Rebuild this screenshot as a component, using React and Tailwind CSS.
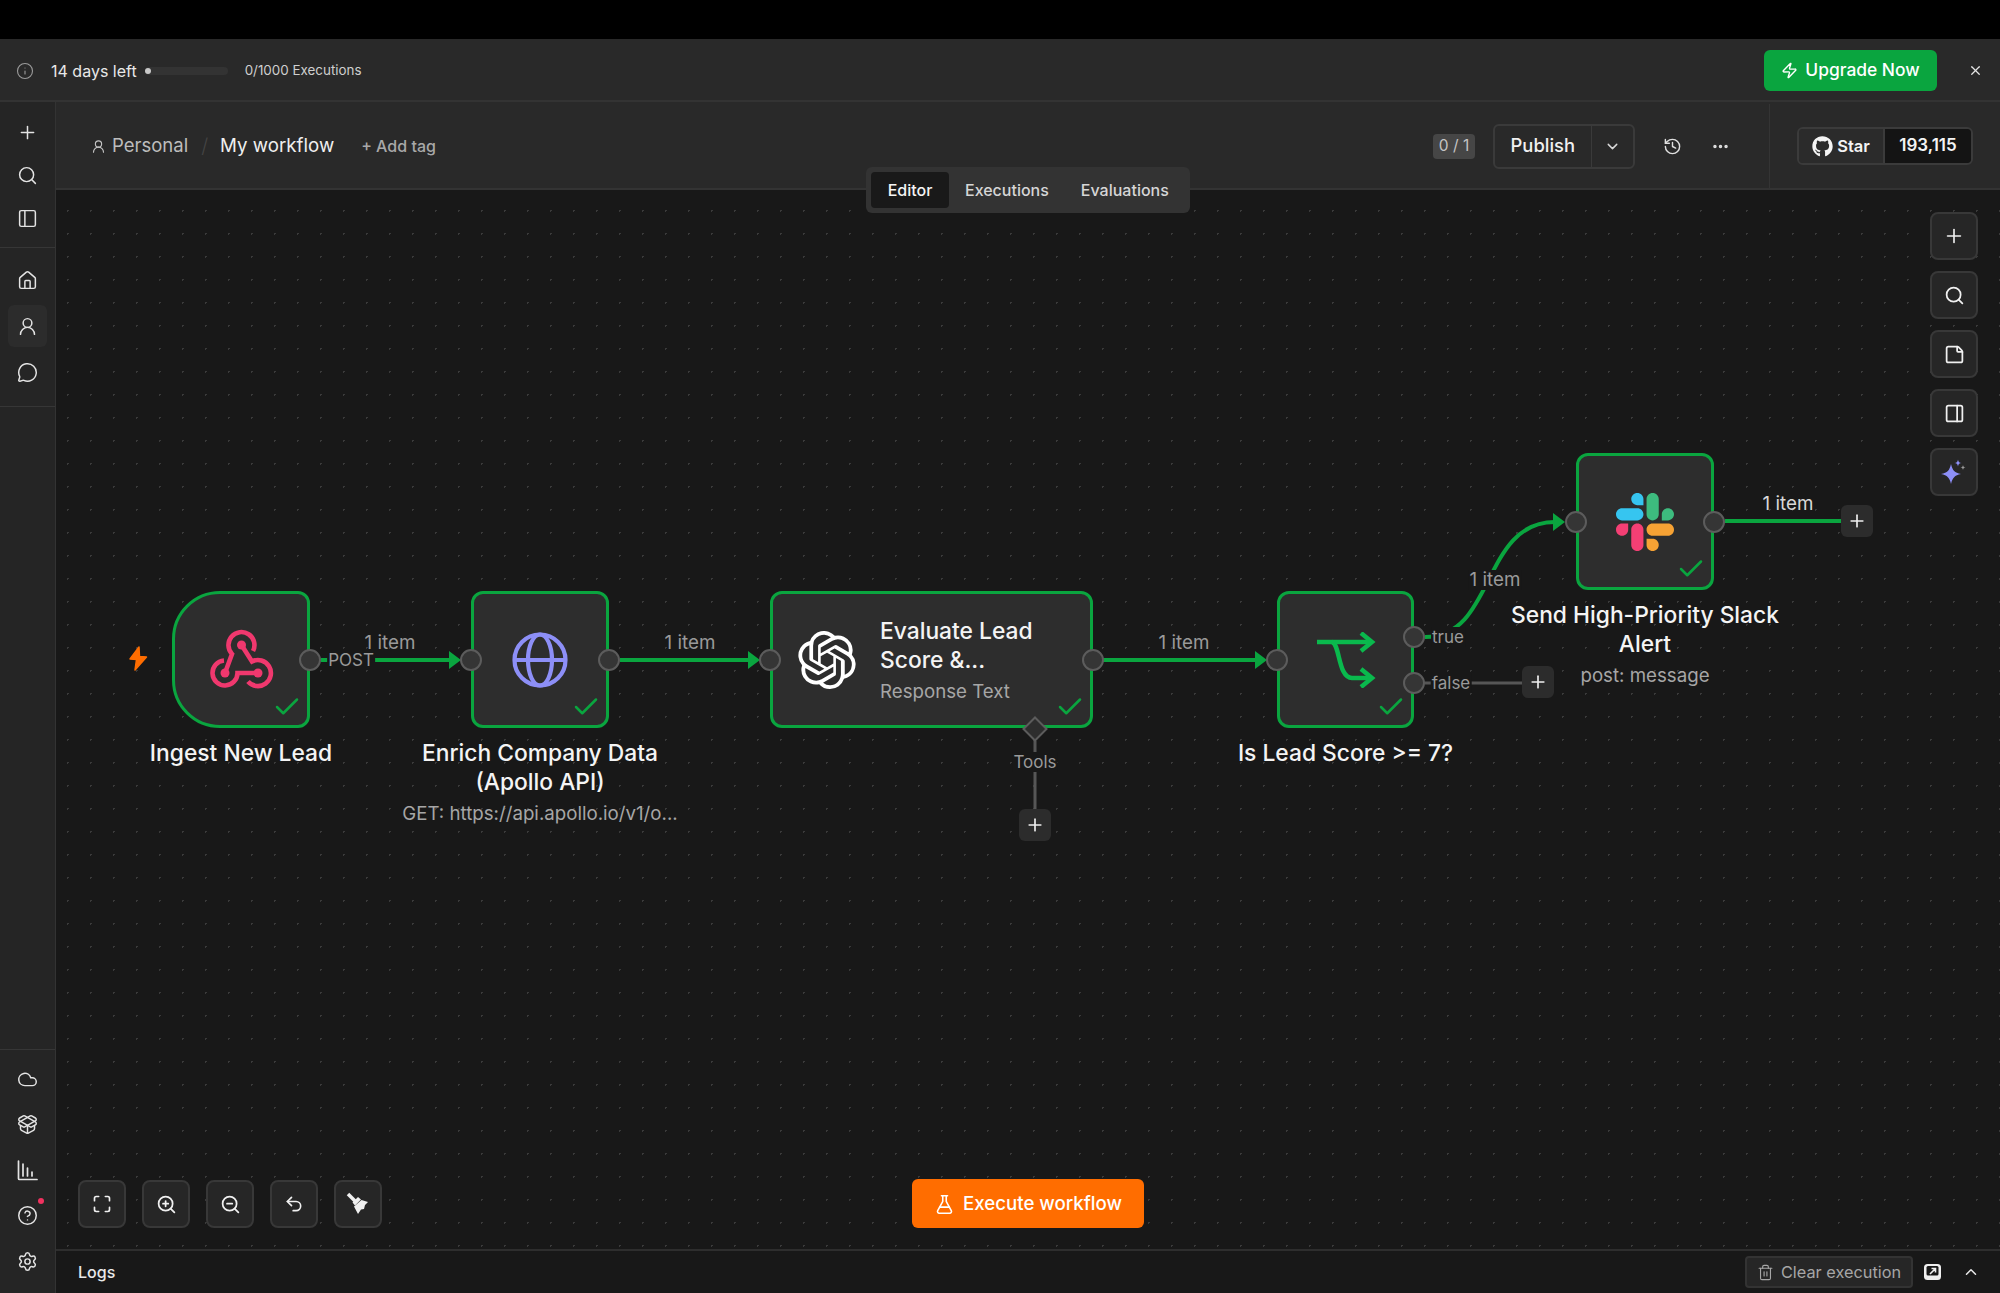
import {
  Check,
  ChevronDown,
  ChevronUp,
  CircleHelp,
  Cloud,
  Ellipsis,
  FlaskConical,
  History,
  House,
  Info,
  Maximize,
  MessageCircle,
  PackageOpen,
  PanelLeft,
  PanelRight,
  Plus,
  Search,
  Settings,
  StickyNote,
  Trash2,
  Undo2,
  UserRound,
  X,
  Zap,
  ZoomIn,
  ZoomOut,
} from "lucide-react";
import { FaGithub } from "react-icons/fa";
import { SiOpenai } from "react-icons/si";

const green = "#0aa53f";

function SideIcon({ icon: Icon, active, dot }) {
  return (
    <div
      className={`relative w-[39px] h-[42px] mx-auto rounded-md flex items-center justify-center text-[#e4e4e4] ${
        active ? "bg-[#2c2c2c]" : ""
      }`}
    >
      <Icon size={21} strokeWidth={1.7} />
      {dot && <span className="absolute top-[3px] right-[3px] w-[6px] h-[6px] rounded-full bg-[#f0325f]" />}
    </div>
  );
}

function ChartIcon() {
  return (
    <svg width="21" height="21" viewBox="0 0 21 21" fill="none" stroke="currentColor" strokeWidth="1.7" strokeLinecap="round">
      <path d="M1.5 1v17.5a1 1 0 0 0 1 1H20" />
      <path d="M6 4v12M10.5 8v8M15 12v4" />
    </svg>
  );
}

function ToolButton({ children }) {
  return (
    <button className="w-[48px] h-[48px] rounded-lg border-2 border-[#383838] bg-[#262626] flex items-center justify-center text-[#f0f0f0]">
      {children}
    </button>
  );
}

function Handle({ className }) {
  return (
    <span
      className={`absolute w-[22px] h-[22px] rounded-full bg-[#353535] border-2 border-[#5c5c5c] ${className}`}
    />
  );
}

function PlusBox({ className }) {
  return (
    <div
      className={`absolute w-[32px] h-[32px] rounded-md bg-[#2c2c2c] flex items-center justify-center text-[#eeeeee] ${className}`}
    >
      <Plus size={20} strokeWidth={2} />
    </div>
  );
}

function EdgeLabel({ children, className }) {
  return (
    <span
      className={`absolute -translate-x-1/2 -translate-y-1/2 leading-[20px] text-[#9a9a9a] whitespace-nowrap ${className}`}
    >
      {children}
    </span>
  );
}

function Node({ className, children, title, sub, labelGap = "mt-[13px]" }) {
  return (
    <div className={`absolute h-[137px] bg-[#2d2d2d] border-[3px] border-[#0aa53f] ${className}`}>
      {children}
      <Check
        size={30}
        strokeWidth={2}
        className="absolute right-[5px] bottom-[3px] text-[#0aa53f]"
      />
      {title && (
        <div className={`absolute top-full left-1/2 -translate-x-1/2 w-[360px] text-center ${labelGap}`}>
          <div className="text-[22.8px] leading-[29px] font-medium text-[#f4f4f4]">{title}</div>
          {sub && <div className="mt-[3px] text-[18.7px] leading-[29px] text-[#a6a6a6]">{sub}</div>}
        </div>
      )}
    </div>
  );
}

function WebhookIcon() {
  return (
    <svg width="80" height="80" viewBox="0 0 80 80" fill="none" stroke="#f0386e" strokeWidth="4.6">
      <path d="M24 53L31 34A13 13 0 1 1 52 31" />
      <path d="M40.500 25L51 41.500A13 13 0 1 1 47 61.500" />
      <path d="M57 53H36.500A12.500 12.500 0 1 1 23 40.500" />
      <circle cx="40.500" cy="25" r="4.500" fill="#f0386e" stroke="none" />
      <circle cx="24" cy="53" r="4.500" fill="#f0386e" stroke="none" />
      <circle cx="57" cy="53" r="4.500" fill="#f0386e" stroke="none" />
    </svg>
  );
}

function BroomIcon() {
  return (
    <svg width="44" height="44" viewBox="2 2 44 44" fill="currentColor">
      <path d="M14 14L22 22" stroke="currentColor" strokeWidth="3.500" />
      <path d="M18.500 22.500L24 17L27 19.500L21 25.500Z" />
      <path d="M20 26.500L27.500 20L34 22L31 25L30 29L27 29.500L24 34Z" />
    </svg>
  );
}

function SlackLogo() {
  return (
    <svg width="58" height="58" viewBox="0 0 122.8 122.8">
      <path
        d="M25.8 77.6c0 7.1-5.8 12.9-12.9 12.9S0 84.7 0 77.6s5.8-12.9 12.9-12.9h12.9v12.9zm6.5 0c0-7.1 5.8-12.9 12.9-12.9s12.9 5.8 12.9 12.9v32.3c0 7.1-5.8 12.9-12.9 12.9s-12.9-5.8-12.9-12.9V77.6z"
        fill="#f43f74"
      />
      <path
        d="M45.2 25.8c-7.1 0-12.9-5.8-12.9-12.9S38.1 0 45.2 0s12.9 5.8 12.9 12.9v12.9H45.2zm0 6.5c7.1 0 12.9 5.8 12.9 12.9s-5.8 12.9-12.9 12.9H12.9C5.8 58.1 0 52.3 0 45.2s5.8-12.9 12.9-12.9h32.3z"
        fill="#36c5f0"
      />
      <path
        d="M97 45.2c0-7.1 5.8-12.9 12.9-12.9s12.9 5.8 12.9 12.9-5.8 12.9-12.9 12.9H97V45.2zm-6.5 0c0 7.1-5.8 12.9-12.9 12.9s-12.9-5.8-12.9-12.9V12.9C64.7 5.8 70.5 0 77.6 0s12.9 5.8 12.9 12.9v32.3z"
        fill="#3dbb7e"
      />
      <path
        d="M77.6 97c7.1 0 12.9 5.8 12.9 12.9s-5.8 12.9-12.9 12.9-12.9-5.8-12.9-12.9V97h12.9zm0-6.5c-7.1 0-12.9-5.8-12.9-12.9s5.8-12.9 12.9-12.9h32.3c7.1 0 12.9 5.8 12.9 12.9s-5.8 12.9-12.9 12.9H77.6z"
        fill="#f6a234"
      />
    </svg>
  );
}

function Edges() {
  return (
    <svg className="absolute inset-0 w-full h-full" fill="none">
      {/* green connections */}
      <g stroke={green} strokeWidth="4">
        <path d="M265 470H395" />
        <path d="M564 470H694" />
        <path d="M1047 470H1201" />
        <path d="M1369 447C1440 447 1425 332 1499 332" />
        <path d="M1669 331H1790" />
      </g>
      <g fill={green}>
        <path d="M393 461L405 470L393 479Z" />
        <path d="M692 461L704 470L692 479Z" />
        <path d="M1199 461L1211 470L1199 479Z" />
        <path d="M1497 323L1509 332L1497 341Z" />
      </g>
      {/* not run yet */}
      <g stroke="#565656" strokeWidth="3">
        <path d="M1369 493H1470" />
        <path d="M979 551V622" />
      </g>
    </svg>
  );
}

export default function App() {
  return (
    <div className="w-[2000px] h-[1293px] flex flex-col overflow-hidden bg-black font-['Inter',sans-serif] text-[#f0f0f0]">
      <div className="h-[39px] shrink-0 bg-black" />

      {/* TRIAL BANNER */}
      <div className="h-[63px] shrink-0 bg-[#292929] border-b-2 border-[#333333] flex items-center pt-[2px] pl-[16px] pr-[15px]">
        <Info size={18} strokeWidth={1.5} className="text-[#9a9a9a]" />
        <span className="ml-[17px] text-[16px] text-[#e8e8e8]">14 days left</span>
        <div className="relative ml-[8px] w-[83px] h-[8px] rounded-full bg-[#333333]">
          <span className="absolute left-0 top-px w-[6px] h-[6px] rounded-full bg-[#c8c8c8]" />
        </div>
        <span className="ml-[17px] text-[13.4px] text-[#cfcfcf]">0/1000 Executions</span>
        <button className="ml-auto w-[173px] h-[41px] rounded-md bg-[#0aa53f] flex items-center justify-center gap-[7px] text-[17.4px] font-medium text-white">
          <Zap size={17} strokeWidth={2} />
          Upgrade Now
        </button>
        <X size={15} className="ml-[31px] mr-[2px] text-[#e4e4e4]" />
      </div>

      <div className="flex-1 flex min-h-0">
        {/* SIDEBAR */}
        <aside className="w-[56px] shrink-0 bg-[#252525] border-r border-[#333333] flex flex-col">
          <div className="h-[146px] pt-[9px] flex flex-col gap-px border-b border-[#363636]">
            <SideIcon icon={Plus} />
            <SideIcon icon={Search} />
            <SideIcon icon={PanelLeft} />
          </div>
          <div className="h-[159px] flex flex-col gap-[4px] border-b border-[#363636] pt-[11px]">
            <SideIcon icon={House} />
            <SideIcon icon={UserRound} active />
            <SideIcon icon={MessageCircle} />
          </div>
          <div className="mt-auto border-t border-[#363636] pt-[8px] pb-[11px] flex flex-col gap-[3.5px]">
            <SideIcon icon={Cloud} />
            <SideIcon icon={PackageOpen} />
            <SideIcon icon={ChartIcon} />
            <SideIcon icon={CircleHelp} dot />
            <SideIcon icon={Settings} />
          </div>
        </aside>

        {/* MAIN COLUMN */}
        <main className="flex-1 relative flex flex-col min-w-0">
          {/* HEADER */}
          <header className="h-[88px] shrink-0 bg-[#292929] border-b-2 border-[#333333] flex items-center pt-[2px] pl-[35px] pr-[27px]">
            <UserRound size={15} strokeWidth={1.8} className="text-[#c4c4c4]" />
            <span className="ml-[6px] text-[18.5px] text-[#bdbdbd]">Personal</span>
            <span className="ml-[13px] text-[20px] text-[#444444] font-light">/</span>
            <span className="ml-[12px] text-[18.7px] text-[#efefef]">My workflow</span>
            <span className="ml-[27px] text-[16px] font-medium text-[#a8a8a8]">+ Add tag</span>

            <span className="ml-auto w-[42px] h-[25px] rounded bg-[#464646] flex items-center justify-center text-[15.5px] text-[#c4c4c4]">
              0 / 1
            </span>
            <div className="ml-[18px] w-[142px] h-[45px] rounded-md border-2 border-[#3a3a3a] flex items-center">
              <span className="w-[97px] text-center text-[18.4px] font-medium text-[#f0f0f0]">Publish</span>
              <span className="h-full w-[43px] border-l border-[#3a3a3a] flex items-center justify-center">
                <ChevronDown size={17} className="text-[#d8d8d8]" />
              </span>
            </div>
            <History size={19} strokeWidth={1.8} className="ml-[28px] text-[#e0e0e0]" />
            <Ellipsis size={19} strokeWidth={2.4} className="ml-[29px] text-[#e0e0e0]" />
            <div className="ml-[39px] h-full border-l border-[#343434] flex items-center pl-[27px]">
              <div className="w-[176px] h-[38px] rounded-md border-2 border-[#3b3b3b] flex overflow-hidden">
                <span className="w-[86px] bg-[#2b2b2b] border-r-2 border-[#3b3b3b] flex items-center justify-center gap-[4px] text-[16.5px] font-semibold text-[#f4f4f4]">
                  <FaGithub size={21} />
                  Star
                </span>
                <span className="flex-1 bg-[#141414] flex items-center justify-center text-[17px] font-semibold text-[#f4f4f4]">
                  193,115
                </span>
              </div>
            </div>
          </header>

          {/* TABS */}
          <div className="absolute left-[810px] top-[65px] z-10 w-[324px] h-[46px] rounded-md bg-[#333333] flex items-center pl-[5px] text-[16px] font-medium text-[#d6d6d6]">
            <span className="w-[78px] h-[36px] rounded bg-[#191919] flex items-center justify-center text-[#f4f4f4]">
              Editor
            </span>
            <span className="ml-[16px]">Executions</span>
            <span className="ml-[32px]">Evaluations</span>
          </div>

          {/* CANVAS */}
          <section className="flex-1 relative min-h-0 bg-[#181818] bg-[radial-gradient(circle,#3a3a3a_1px,transparent_1px)] bg-size-[23px_23px] bg-position-[0px_9px]">
            <Edges />

            <EdgeLabel className="left-[295px] top-[470px] px-[1px] bg-[#181818] text-[17px]">POST</EdgeLabel>
            <EdgeLabel className="left-[334px] top-[453px] text-[18.8px]">1 item</EdgeLabel>
            <EdgeLabel className="left-[634px] top-[453px] text-[18.8px]">1 item</EdgeLabel>
            <EdgeLabel className="left-[1128px] top-[453px] text-[18.8px]">1 item</EdgeLabel>
            <EdgeLabel className="left-[1439px] top-[390px] px-[1px] bg-[#181818] text-[18.8px]">1 item</EdgeLabel>
            <EdgeLabel className="left-[1732px] top-[314px] text-[18.8px] text-[#d8d8d8]">1 item</EdgeLabel>
            <EdgeLabel className="left-[1392px] top-[447px] px-[1px] bg-[#181818] text-[17px]">true</EdgeLabel>
            <EdgeLabel className="left-[1395px] top-[493px] px-[1px] bg-[#181818] text-[17px]">false</EdgeLabel>
            <EdgeLabel className="left-[979px] top-[572px] px-[1px] bg-[#181818] text-[17px]">Tools</EdgeLabel>

            <svg width="36" height="36" viewBox="0 0 36 36" className="absolute left-[64px] top-[450px]">
              <path
                d="M19 7L10 19L16.500 19.500L15 30L26.500 17L19.500 16.500Z"
                fill="#ff6d00"
                stroke="#ff6d00"
                strokeWidth="1.500"
                strokeLinejoin="round"
              />
            </svg>

            {/* TRIGGER */}
            <Node
              className="left-[116px] top-[401px] w-[138px] rounded-l-[48px] rounded-r-[12px]"
              title="Ingest New Lead"
            >
              <div className="w-full h-full flex items-center justify-center">
                <WebhookIcon />
              </div>
              <Handle className="-right-[14px] top-[55px]" />
            </Node>

            {/* HTTP REQUEST */}
            <Node
              className="left-[415px] top-[401px] w-[138px] rounded-xl"
              title={
                <>
                  Enrich Company Data
                  <br />
                  (Apollo API)
                </>
              }
              sub="GET: https://api.apollo.io/v1/o..."
            >
              <div className="w-full h-full flex items-center justify-center">
                <svg width="58" height="58" viewBox="0 0 58 58" fill="none" stroke="#8d8ff7" strokeWidth="4.2">
                  <circle cx="29" cy="29" r="25.5" />
                  <ellipse cx="29" cy="29" rx="12" ry="25.5" />
                  <path d="M3.5 29H54.5" />
                </svg>
              </div>
              <Handle className="-left-[14px] top-[55px]" />
              <Handle className="-right-[14px] top-[55px]" />
            </Node>

            {/* OPENAI */}
            <Node className="left-[714px] top-[401px] w-[323px] rounded-xl flex items-center">
              <SiOpenai size={58} className="ml-[25px] text-white shrink-0" />
              <div className="ml-[24px] pt-[2px] w-[190px]">
                <div className="text-[22.8px] leading-[29px] font-medium text-[#f4f4f4]">
                  Evaluate Lead
                  <br />
                  Score &...
                </div>
                <div className="mt-[3px] text-[18.7px] leading-[29px] text-[#a6a6a6]">Response Text</div>
              </div>
              <Handle className="-left-[14px] top-[55px]" />
              <Handle className="-right-[14px] top-[55px]" />
              <svg
                width="26"
                height="26"
                viewBox="0 0 26 26"
                className="absolute left-[249px] top-[122px]"
              >
                <path d="M13 1.5L24.5 13L13 24.5L1.5 13Z" fill="#2d2d2d" stroke="#5c5c5c" strokeWidth="2" />
              </svg>
            </Node>

            {/* IF */}
            <Node
              className="left-[1221px] top-[401px] w-[137px] rounded-xl"
              title="Is Lead Score >= 7?"
            >
              <div className="w-full h-full flex items-center justify-center">
                <svg width="60" height="56" viewBox="0 0 60 56" fill="none" stroke="#0ab94d" strokeWidth="4.5">
                  <path d="M1 10H56" />
                  <path d="M45 1L56 10L45 19" />
                  <path d="M16 10C24 12 22 46 36 46H56" />
                  <path d="M45 37L56 46L45 55" />
                </svg>
              </div>
              <Handle className="-right-[14px] top-[32px]" />
              <Handle className="-right-[14px] top-[78px]" />
              <Handle className="-left-[14px] top-[55px]" />
            </Node>

            {/* SLACK */}
            <Node
              className="left-[1520px] top-[263px] w-[138px] rounded-xl"
              title={
                <>
                  Send High-Priority Slack
                  <br />
                  Alert
                </>
              }
              sub="post: message"
            >
              <div className="w-full h-full flex items-center justify-center">
                <SlackLogo />
              </div>
              <Handle className="-left-[14px] top-[55px]" />
              <Handle className="-right-[14px] top-[55px]" />
            </Node>

            <PlusBox className="left-[1785px] top-[315px]" />
            <PlusBox className="left-[1466px] top-[476px]" />
            <PlusBox className="left-[963px] top-[619px]" />

            {/* RIGHT TOOLS */}
            <div className="absolute right-[22px] top-[22px] flex flex-col gap-[11px]">
              <ToolButton>
                <Plus size={22} strokeWidth={1.8} />
              </ToolButton>
              <ToolButton>
                <Search size={21} strokeWidth={2} />
              </ToolButton>
              <ToolButton>
                <StickyNote size={21} strokeWidth={2} />
              </ToolButton>
              <ToolButton>
                <PanelRight size={21} strokeWidth={2} />
              </ToolButton>
              <ToolButton>
                <svg width="28" height="28" viewBox="0 0 28 28">
                  <path d="M11 6C12.500 12.500 14.500 14.500 21 16C14.500 17.500 12.500 19.500 11 26C9.500 19.500 7.500 17.500 1 16C7.500 14.500 9.500 12.500 11 6Z" fill="#8d8ff7" />
                  <path d="M18 1.500C18.400 4 19 4.600 21.500 5C19 5.400 18.400 6 18 8.500C17.600 6 17 5.400 14.500 5C17 4.600 17.600 4 18 1.500Z" fill="#8d8ff7" />
                  <path d="M23 7C23.300 8.800 23.700 9.200 25.500 9.500C23.700 9.800 23.300 10.200 23 12C22.700 10.200 22.300 9.800 20.500 9.500C22.300 9.200 22.700 8.800 23 7Z" fill="#9a9a9a" />
                </svg>
              </ToolButton>
            </div>

            {/* BOTTOM LEFT TOOLS */}
            <div className="absolute left-[22px] bottom-[21px] flex gap-[16px]">
              <ToolButton>
                <Maximize size={20} strokeWidth={2} />
              </ToolButton>
              <ToolButton>
                <ZoomIn size={21} strokeWidth={2} />
              </ToolButton>
              <ToolButton>
                <ZoomOut size={21} strokeWidth={2} />
              </ToolButton>
              <ToolButton>
                <Undo2 size={20} strokeWidth={2} />
              </ToolButton>
              <ToolButton>
                <BroomIcon />
              </ToolButton>
            </div>

            {/* EXECUTE */}
            <button className="absolute left-[856px] bottom-[21px] w-[232px] h-[49px] pt-[2px] rounded-md bg-[#ff6d00] flex items-center justify-center gap-[8px] text-[18.7px] font-medium text-white">
              <FlaskConical size={21} strokeWidth={1.8} />
              Execute workflow
            </button>
          </section>

          {/* LOGS BAR */}
          <footer className="h-[44px] shrink-0 bg-[#181818] border-t-2 border-[#2e2e2e] flex items-center pl-[22px] pr-[20px]">
            <span className="text-[16px] font-medium text-[#e8e8e8]">Logs</span>
            <button className="ml-auto mr-[1px] w-[168px] h-[32px] rounded border-2 border-[#333333] bg-[#262626] flex items-center justify-center gap-[7px] text-[16.3px] text-[#a6a6a6]">
              <Trash2 size={17} strokeWidth={1.6} />
              Clear execution
            </button>
            <svg width="17" height="16" viewBox="0 0 17 16" className="ml-[10px]">
              <rect width="17" height="16" rx="3.500" fill="#f0f0f0" />
              <rect x="2.500" y="2" width="12" height="9.500" rx="1.500" fill="#181818" />
              <path d="M6 10L11.500 4.500M7.500 4.500H11.500V8.500" fill="none" stroke="#f0f0f0" strokeWidth="1.600" />
            </svg>
            <ChevronUp size={18} strokeWidth={2} className="ml-[21px] text-[#e8e8e8]" />
          </footer>
        </main>
      </div>
    </div>
  );
}
